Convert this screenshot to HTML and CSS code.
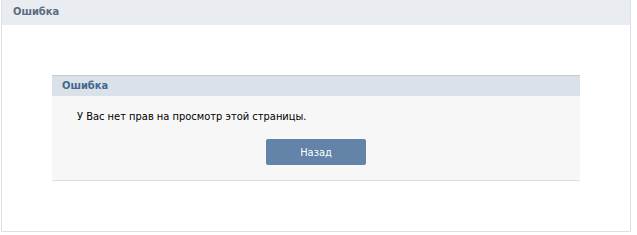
FILE: index.html
```html
<!DOCTYPE html>
<html lang="ru">
<head>
<meta charset="UTF-8">
<title>Ошибка</title>
<link rel="stylesheet" href="styles.css">
</head>
<body>

<div class="page">
  <div class="page-head">Ошибка</div>
  <div class="page-body">
    <div class="msg-box">
      <div class="msg-head">Ошибка</div>
      <div class="msg-body">
        <div class="msg-text">У Вас нет прав на просмотр этой страницы.</div>
        <div class="msg-actions">
          <button class="btn">Назад</button>
        </div>
      </div>
    </div>
  </div>
</div>

</body>
</html>
```

FILE: styles.css
```css
body{
  margin:0; background:#fff;
  font-family:"DejaVu Sans Condensed", "DejaVu Sans", sans-serif; font-size:11px; color:#000;
}
.page{
  width:628px; margin-left:1px;
  border:1px solid #dde1e6; border-top:0;
}
.page-head{
  height:25px; line-height:24px;
  background:#e9ecf0;
  padding-left:11px;
  font-weight:bold; color:#5b6d82;
}
.page-body{
  padding:50px;
}
.msg-box{
  background:#f7f7f7;
  border-bottom:1px solid #dde0e4;
}
.msg-head{
  height:20px; line-height:20px;
  border-top:1px solid #c3cad2;
  background:#dae1e8;
  padding-left:10px;
  font-weight:bold; color:#45688e;
}
.msg-body{
  padding:14px 0 15px;
}
.msg-text{
  padding-left:25px;
  line-height:14px;
}
.msg-actions{
  margin-top:15px;
  display:flex; justify-content:center;
}
.btn{
  width:100px; height:26px;
  border:0; border-radius:2px;
  background:#6383a8; color:#fff;
  font-family:inherit; font-size:11px;
  cursor:pointer;
}
```
